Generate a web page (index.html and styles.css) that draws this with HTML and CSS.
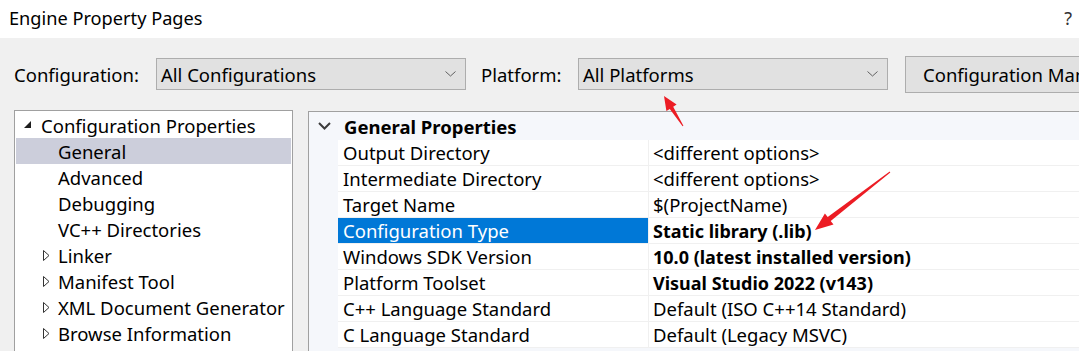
FILE: index.html
```html
<!DOCTYPE html>
<html>
<head>
    <link rel="stylesheet" href="styles.css">
</head>
<body>
    <div class="titlebar">
        <span class="title">Engine Property Pages</span>
        <span class="help">?</span>
    </div>

    <div class="toolbar">
        <label class="tb-label">Configuration:</label>
        <div class="combo">
            <span>All Configurations</span>
            <svg class="combo-arrow" width="11" height="6" viewBox="0 0 11 6"><polyline points="0.5,0.5 5.5,5 10.5,0.5" fill="none" stroke="#606060" stroke-width="1"/></svg>
        </div>
        <label class="tb-label platform-label">Platform:</label>
        <div class="combo">
            <span>All Platforms</span>
            <svg class="combo-arrow" width="11" height="6" viewBox="0 0 11 6"><polyline points="0.5,0.5 5.5,5 10.5,0.5" fill="none" stroke="#606060" stroke-width="1"/></svg>
        </div>
        <button class="tb-button">Configuration Manager...</button>
    </div>

    <div class="main">
        <!-- left tree -->
        <div class="tree">
            <div class="tree-row root">
                <svg class="twisty" width="8" height="8" viewBox="0 0 8 8"><polygon points="7,0 7,7 0,7" fill="#1e1e1e"/></svg>
                <span>Configuration Properties</span>
            </div>
            <div class="tree-row child selected"><span>General</span></div>
            <div class="tree-row child"><span>Advanced</span></div>
            <div class="tree-row child"><span>Debugging</span></div>
            <div class="tree-row child"><span>VC++ Directories</span></div>
            <div class="tree-row child expandable">
                <svg class="twisty" width="7" height="11" viewBox="0 0 7 11"><polygon points="0.5,0.5 6,5.5 0.5,10.5" fill="none" stroke="#333" stroke-width="1"/></svg>
                <span>Linker</span>
            </div>
            <div class="tree-row child expandable">
                <svg class="twisty" width="7" height="11" viewBox="0 0 7 11"><polygon points="0.5,0.5 6,5.5 0.5,10.5" fill="none" stroke="#333" stroke-width="1"/></svg>
                <span>Manifest Tool</span>
            </div>
            <div class="tree-row child expandable">
                <svg class="twisty" width="7" height="11" viewBox="0 0 7 11"><polygon points="0.5,0.5 6,5.5 0.5,10.5" fill="none" stroke="#333" stroke-width="1"/></svg>
                <span>XML Document Generator</span>
            </div>
            <div class="tree-row child expandable">
                <svg class="twisty" width="7" height="11" viewBox="0 0 7 11"><polygon points="0.5,0.5 6,5.5 0.5,10.5" fill="none" stroke="#333" stroke-width="1"/></svg>
                <span>Browse Information</span>
            </div>
        </div>

        <!-- right property grid -->
        <div class="grid">
            <div class="grid-header">
                <svg class="chevron" width="13" height="8" viewBox="0 0 13 8"><polyline points="1,1 6.5,6.5 12,1" fill="none" stroke="#3c3c3c" stroke-width="2"/></svg>
                <span>General Properties</span>
            </div>
            <div class="prop-row">
                <div class="prop-name">Output Directory</div>
                <div class="prop-value">&lt;different options&gt;</div>
            </div>
            <div class="prop-row">
                <div class="prop-name">Intermediate Directory</div>
                <div class="prop-value">&lt;different options&gt;</div>
            </div>
            <div class="prop-row">
                <div class="prop-name">Target Name</div>
                <div class="prop-value">$(ProjectName)</div>
            </div>
            <div class="prop-row selected">
                <div class="prop-name">Configuration Type</div>
                <div class="prop-value bold">Static library (.lib)</div>
            </div>
            <div class="prop-row">
                <div class="prop-name">Windows SDK Version</div>
                <div class="prop-value bold">10.0 (latest installed version)</div>
            </div>
            <div class="prop-row">
                <div class="prop-name">Platform Toolset</div>
                <div class="prop-value bold">Visual Studio 2022 (v143)</div>
            </div>
            <div class="prop-row">
                <div class="prop-name">C++ Language Standard</div>
                <div class="prop-value">Default (ISO C++14 Standard)</div>
            </div>
            <div class="prop-row">
                <div class="prop-name">C Language Standard</div>
                <div class="prop-value">Default (Legacy MSVC)</div>
            </div>
        </div>
    </div>

    <!-- red annotation arrows drawn over the dialog -->
    <svg class="annotations" width="1079" height="351" viewBox="0 0 1079 351">
        <polygon points="664,96 676.6,104.6 673.2,106.7 683.4,125.7 682.6,126.3 669.8,108.9 666.4,111" fill="#ec1c24"/>
        <polygon points="815,230 833.5,224.5 830.7,221 890.3,172.4 889.7,171.6 827.7,217 824.9,213.5" fill="#ec1c24"/>
    </svg>
</body>
</html>
```

FILE: styles.css
```css
body {
    margin: 0;
    width: 1079px;
    height: 351px;
    overflow: hidden;
    background-color: #f0f0f0;
    font-family: "Noto Sans", "Open Sans", sans-serif;
    font-size: 18.5px;
    color: #000;
    position: relative;
}

.titlebar {
    height: 38px;
    background-color: #fff;
    display: flex;
    align-items: center;
    justify-content: space-between;
    padding: 0 7px 2px 9px;
    box-sizing: border-box;
}

.title {
    font-size: 18.2px;
}

.help {
    font-size: 18px;
    color: #333;
}

.toolbar {
    height: 72px;
    display: flex;
    align-items: center;
    padding-left: 14px;
    white-space: nowrap;
    overflow: hidden;
}

.toolbar > * {
    flex-shrink: 0;
}

.tb-label {
    width: 142px;
}

.platform-label {
    width: 97px;
    margin-left: 15px;
}

.combo {
    width: 310px;
    height: 32px;
    box-sizing: border-box;
    border: 1px solid #adadad;
    background-color: #e1e1e1;
    display: flex;
    align-items: center;
    justify-content: space-between;
    padding: 0 9px 0 4px;
}

.combo-arrow {
    display: block;
}

.tb-button {
    margin-left: 17px;
    height: 37px;
    width: 260px;
    border: 1px solid #adadad;
    background-color: #e1e1e1;
    font-family: inherit;
    font-size: 18.5px;
    padding: 0 0 0 17px;
    text-align: left;
    white-space: nowrap;
    overflow: hidden;
}

.main {
    display: flex;
    align-items: flex-start;
    padding-left: 14px;
}

.tree {
    width: 279px;
    height: 241px;
    box-sizing: border-box;
    border: 1px solid #a0a0a0;
    border-bottom: none;
    background-color: #fff;
    padding: 1px 1px 0 1px;
    overflow: hidden;
}

.tree-row {
    height: 26px;
    display: flex;
    align-items: center;
    white-space: nowrap;
}

.tree-row.root {
    padding-left: 8px;
}

.tree-row.root .twisty {
    margin-right: 9px;
}

.tree-row.child {
    padding-left: 42px;
}

.tree-row.expandable {
    padding-left: 27px;
}

.tree-row.expandable .twisty {
    margin-right: 8px;
}

.tree-row.selected {
    background-color: #cccedb;
}

.grid {
    margin-left: 15px;
    margin-top: 1px;
    flex: 1;
    height: 240px;
    overflow: hidden;
    border-top: 1px solid #a0a0a0;
    border-left: 1px solid #a0a0a0;
    background-color: #f5f7fb;
}

.grid-header {
    height: 28px;
    display: flex;
    align-items: center;
    padding-left: 9px;
    font-weight: bold;
}

.chevron {
    margin-right: 13px;
}

.prop-row {
    display: flex;
    height: 26px;
    margin-left: 29px;
    background-color: #fff;
    border-bottom: 1px solid #f0f0f0;
    box-sizing: border-box;
    white-space: nowrap;
}

.prop-name {
    width: 311px;
    padding-left: 5px;
    box-sizing: border-box;
    display: flex;
    align-items: center;
    border-right: 1px solid #f0f0f0;
}

.prop-value {
    padding-left: 4px;
    display: flex;
    align-items: center;
}

.prop-value.bold {
    font-weight: bold;
    font-size: 18px;
}

.prop-row.selected .prop-name {
    background-color: #0078d7;
    color: #fff;
}

.annotations {
    position: absolute;
    left: 0;
    top: 0;
    pointer-events: none;
}
```
